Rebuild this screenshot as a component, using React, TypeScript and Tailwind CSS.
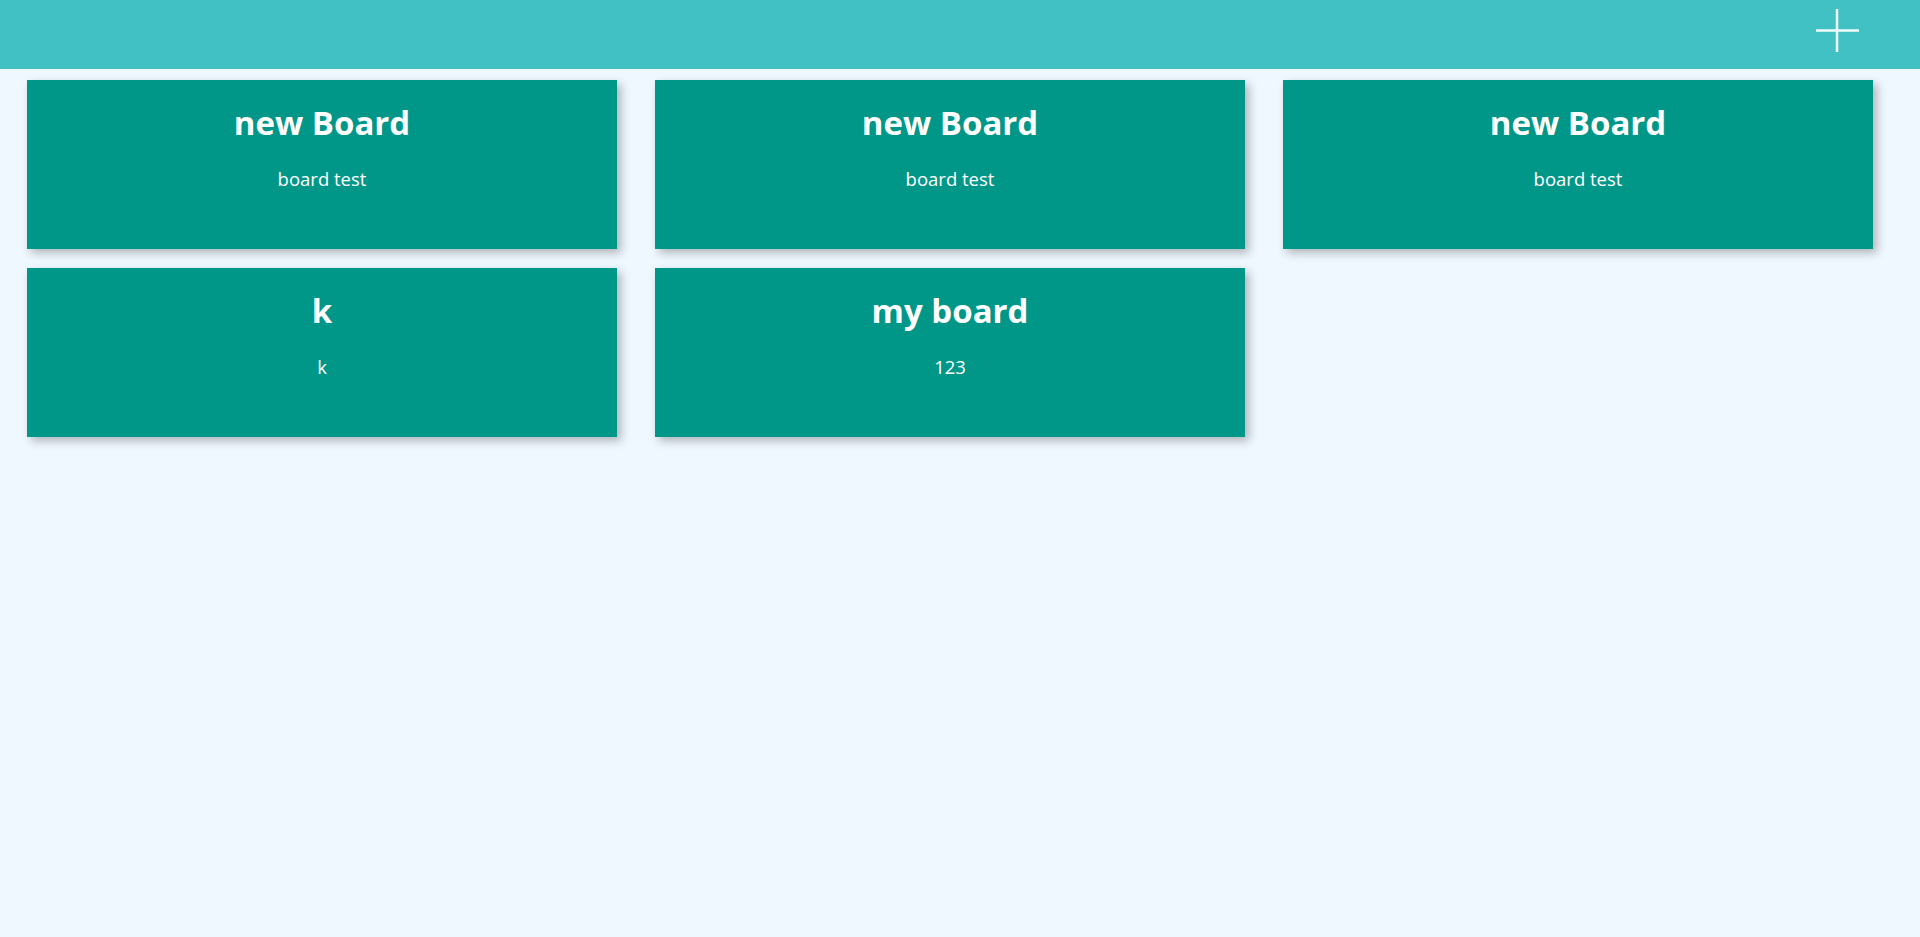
const boards = [
  { title: "new Board", description: "board test" },
  { title: "new Board", description: "board test" },
  { title: "new Board", description: "board test" },
  { title: "k", description: "k" },
  { title: "my board", description: "123" },
];

function PlusIcon() {
  return (
    <svg width="44" height="44" viewBox="0 0 44 44" fill="none">
      <line x1="22" y1="0" x2="22" y2="43" stroke="#f0fbff" strokeWidth="2.5" />
      <line x1="1" y1="21.5" x2="44" y2="21.5" stroke="#f0fbff" strokeWidth="2.5" />
    </svg>
  );
}

function BoardCard({ title, description }: { title: string; description: string }) {
  return (
    <div className="w-[590px] h-[169px] bg-[#009688] shadow-[4px_4px_9px_rgba(0,0,0,0.28)] flex flex-col items-center pt-[21px] text-white cursor-pointer">
      <h1 className="text-[33px] leading-[44px] font-bold">{title}</h1>
      <p className="mt-[21px] text-[18.5px] leading-[25px]">{description}</p>
    </div>
  );
}

export default function App() {
  return (
    <div className="min-h-screen bg-[#f0f8ff] font-['Open_Sans',sans-serif]">
      <header className="h-[69px] bg-[#41c1c4] flex items-start justify-end pt-[9px] pr-[61px]">
        <button className="block">
          <PlusIcon />
        </button>
      </header>
      <main className="pt-[11px] pl-[27px] grid grid-cols-[repeat(3,590px)] gap-x-[38px] gap-y-[19px]">
        {boards.map((b, i) => (
          <BoardCard key={i} title={b.title} description={b.description} />
        ))}
      </main>
    </div>
  );
}
